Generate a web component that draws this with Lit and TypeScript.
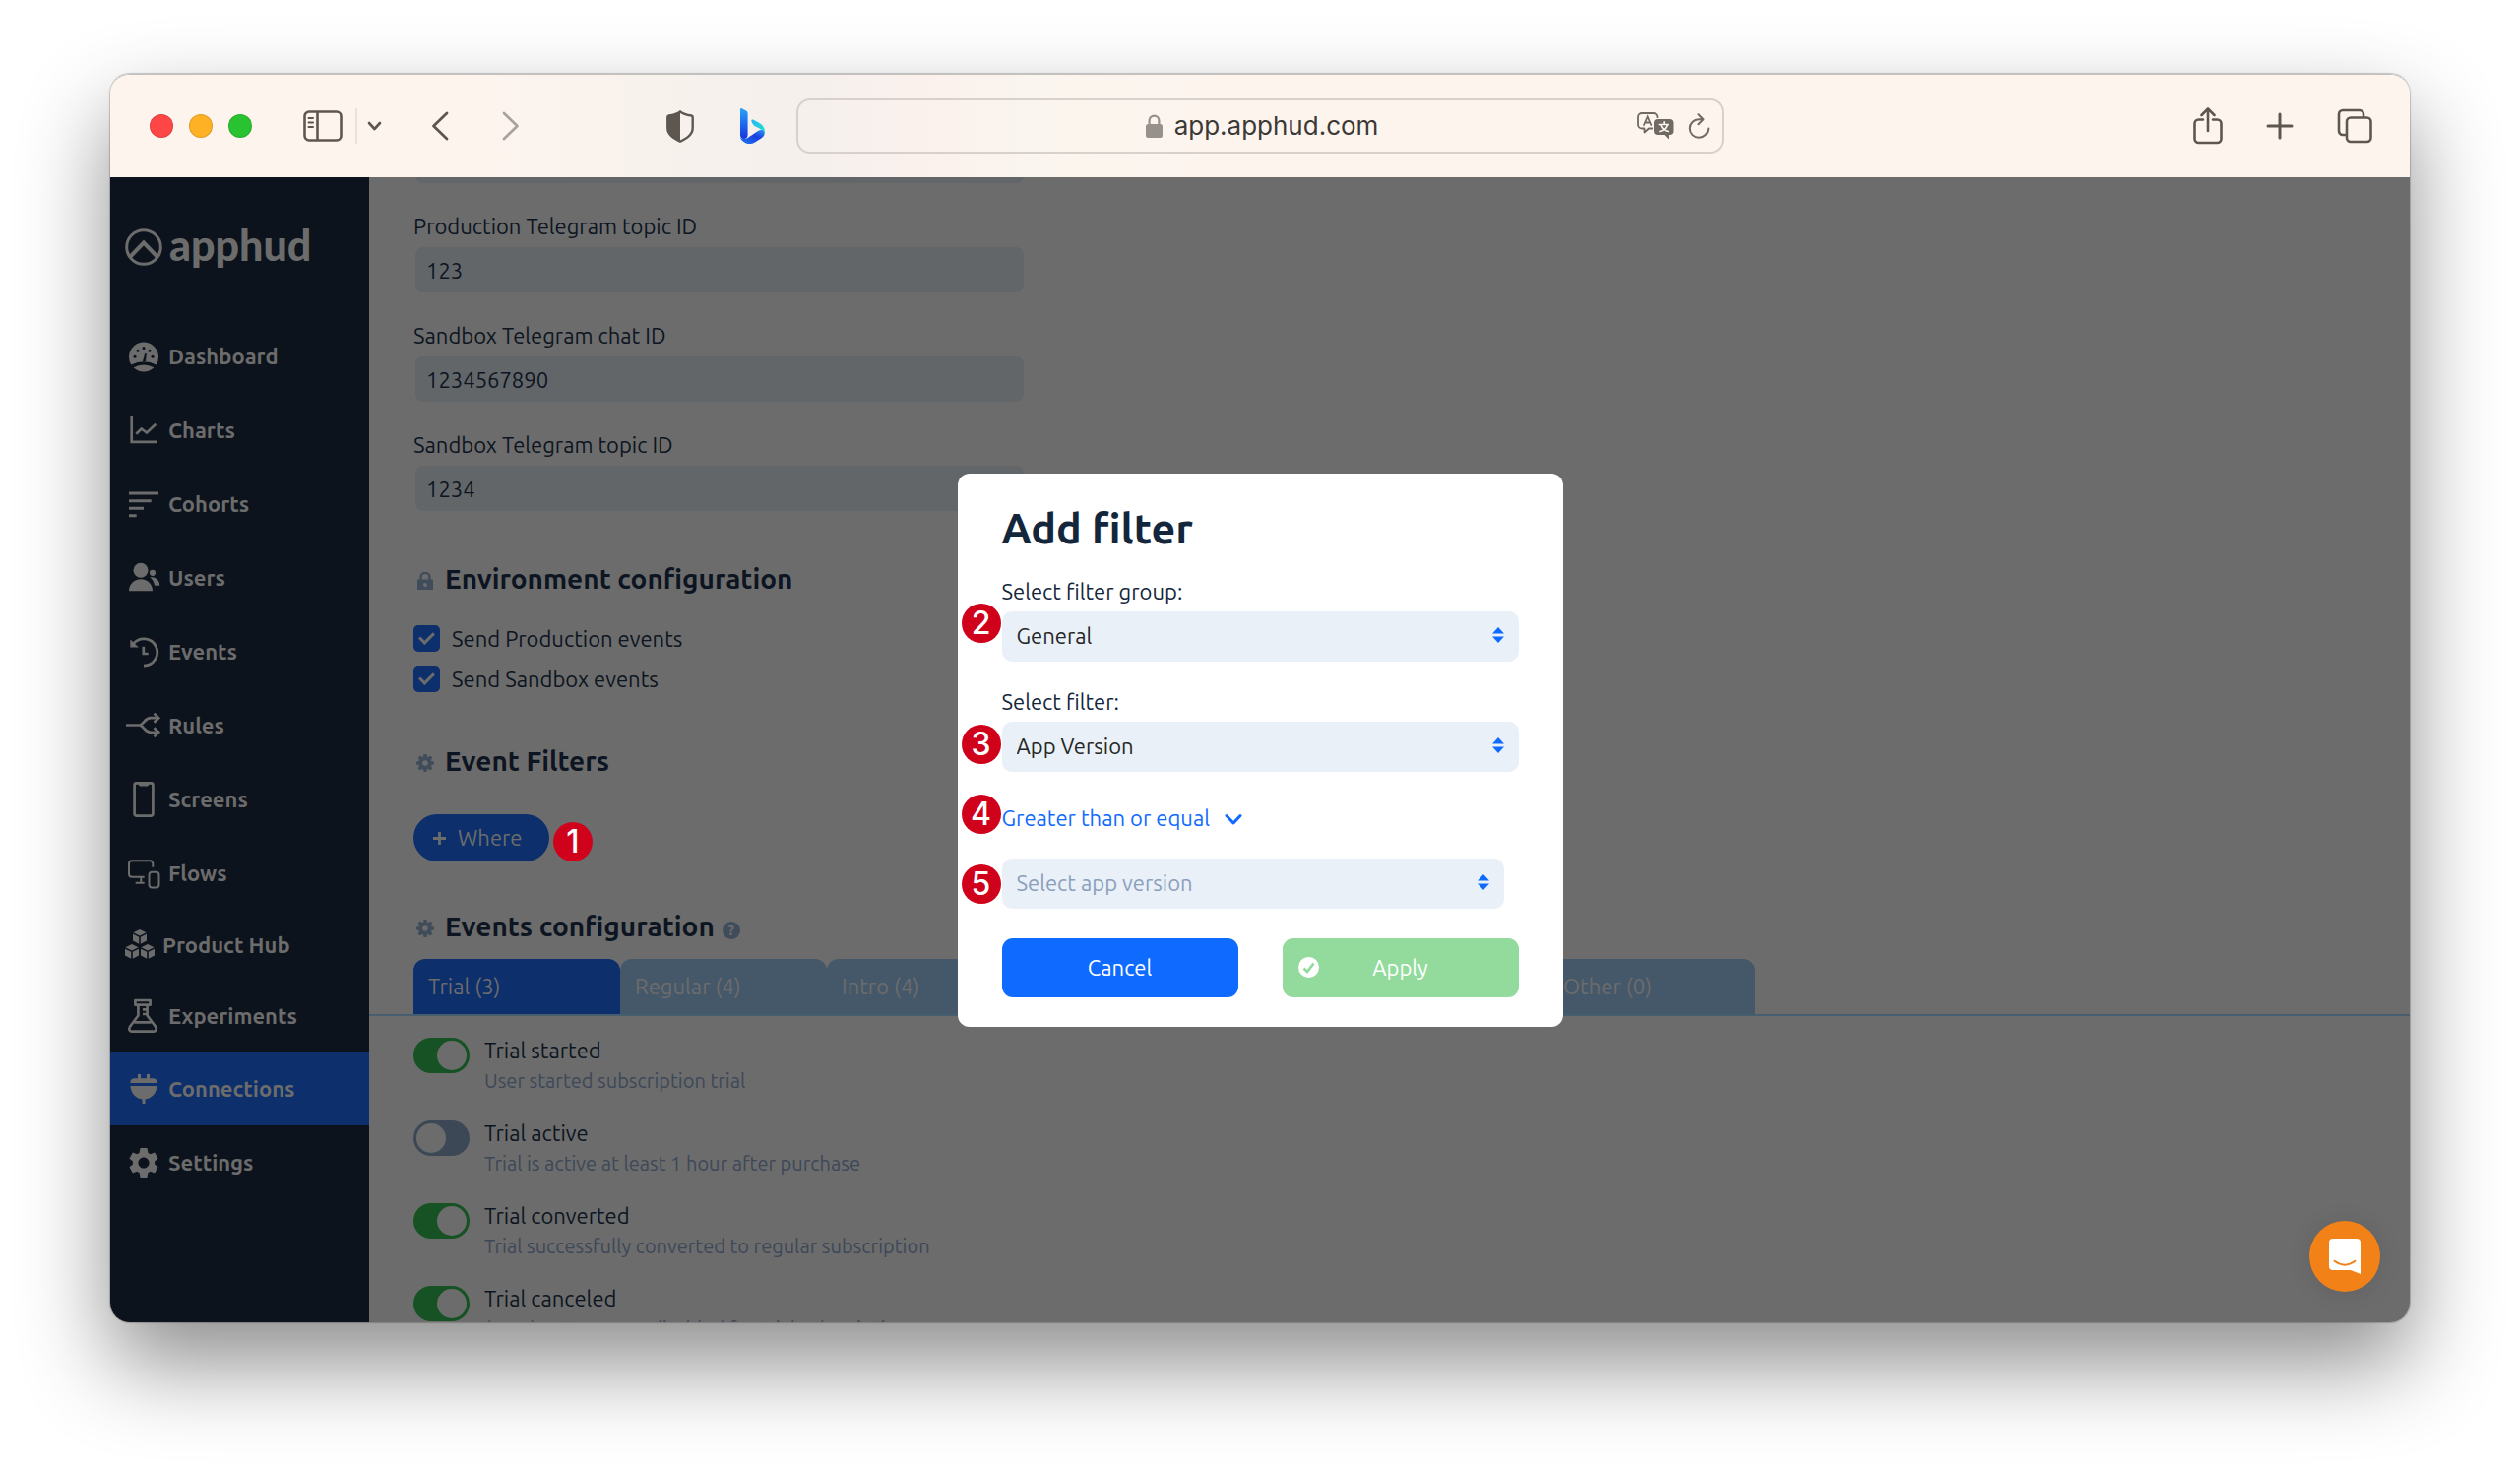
import { LitElement, html, css, svg, nothing } from "lit";
import { customElement, state } from "lit/decorators.js";

const gearTeeth = [0, 45, 90, 135, 180, 225, 270, 315];

const smallGear = html`<svg class="head-icon" viewBox="0 0 18 18" aria-hidden="true">
  <circle cx="9" cy="9" r="4.8" fill="none" stroke="currentColor" stroke-width="4"></circle>
  ${gearTeeth.map((a) => svg`<rect x="7.2" y="0" width="3.6" height="4" rx="1" fill="currentColor" transform="rotate(${a} 9 9)"></rect>`)}
</svg>`;

const smallLock = html`<svg class="head-icon" viewBox="0 0 18 18" aria-hidden="true">
  <path d="M4.6 8V5.2a4.4 4.4 0 0 1 8.8 0V8" fill="none" stroke="currentColor" stroke-width="2.4"></path>
  <path fill="currentColor" fill-rule="evenodd" d="M1 7.6h16V18H1zM9 11a2 2 0 1 0 0 4 2 2 0 0 0 0-4z"></path>
</svg>`;

const cube = (x: number, y: number) => svg`<g transform="translate(${x} ${y})" fill="currentColor">
  <path d="M7 0l6.6 3.2L7 6.4.4 3.2z"></path><path d="M0 4.8l6.2 3v7L0 11.6z"></path><path d="M14 4.8l-6.2 3v7l6.2-3.2z"></path></g>`;

const navIcons: Record<string, unknown> = {
  Dashboard: svg`<path fill="currentColor" d="M5.3 26.6A15 15 0 1 1 30.7 26.6Q18 20 5.3 26.6z"></path>
    <path fill="currentColor" d="M7.6 29.2Q18 23.600 28.4 29.200A15 15 0 0 1 7.600 29.200z"></path>
    <g fill="#0c131c"><circle cx="9" cy="18.300" r="1.500"></circle><circle cx="12" cy="12.300" r="1.500"></circle><circle cx="18" cy="9.500" r="1.500"></circle><circle cx="24" cy="12.300" r="1.500"></circle><circle cx="27" cy="18.300" r="1.500"></circle>
    <path d="M19.200 15l1.600.3-.8 7.700h-3z"></path></g>`,
  Charts: svg`<path fill="none" stroke="currentColor" stroke-width="2.700" d="M5.700 4V29.800H31.700M10.300 21.800L15.700 16.500 21 20.500 30.300 11.800"></path>`,
  Cohorts: svg`<path fill="currentColor" d="M3 5.500h30v3H3zM3 13.200h22.700v3H3zM3 20.800h15v3H3zM3 28.200h7.700v3H3z"></path>`,
  Users: svg`<g fill="currentColor"><circle cx="15" cy="10.200" r="7.500"></circle><path d="M3 31.200c0-7 5-12 12-12s12 5 12 12z"></path><circle cx="27" cy="12.800" r="3.100"></circle><path d="M24.300 17.600c5.700-1.400 9.800 2.500 10 8.200h-5.200c-.6-3.600-2.200-6.200-4.800-8.200z"></path></g>`,
  Events: svg`<path fill="none" stroke="currentColor" stroke-width="2.700" d="M18 32.200A13.700 13.700 0 1 0 7.400 9.900M17.800 12.800V20H22.700"></path><path fill="currentColor" d="M4.300 5.500v8h8.600z"></path>`,
  Rules: svg`<g fill="none" stroke="currentColor" stroke-width="2.700"><path d="M0 17.500H13.500C18 17.500 18.500 10.200 25 10.200H33M13.500 17.500C18 17.500 18.500 24.800 25 24.800H33"></path><path d="M28.500 5.600L33.200 10.200 28.500 14.800M28.500 20.200L33.200 24.800 28.500 29.400"></path></g>`,
  Screens: svg`<rect x="8.600" y="1.300" width="18.800" height="33.400" rx="2.400" fill="none" stroke="currentColor" stroke-width="2.700"></rect><path fill="currentColor" d="M12.500 1.500h11c0 2-1 3-2 3h-7c-1 0-2-1-2-3z"></path>`,
  Flows: svg`<g fill="none" stroke="currentColor" stroke-width="2"><path d="M27.300 11.700V8.300a3 3 0 0 0-3-3H6a3 3 0 0 0-3 3V18.700a3 3 0 0 0 3 3H18.700M15.300 22V27.700M9.700 27.700H18.700"></path><rect x="23.500" y="16.700" width="10" height="15.700" rx="3"></rect></g>`,
  "Product Hub": svg`${cube(13, 2)}${cube(5, 17)}${cube(21, 17)}`,
  Experiments: svg`<g fill="none" stroke="currentColor" stroke-width="2.700" stroke-linejoin="round"><rect x="9.400" y="2" width="15.200" height="4.700"></rect><path d="M12.400 7V17.500L4 28.800c-1.700 3 0 4.900 2 4.900H28c2 0 3.700-1.900 2-4.900L21.600 17.500V7M8.500 24.300h17M21 11.300h-4M21 16h-4"></path></g>`,
  Connections: svg`<path fill="currentColor" d="M12 3h3v5h-3zM21 3h3v5h-3zM8 7.300h20q3.700.4 3.700 4.700H4.300q0-4.300 3.700-4.700zM4.300 15h27.400c-1 8-6 13-12.200 13.500V33h-3v-4.500C10.300 28 5.300 23 4.300 15z"></path>`,
  Settings: svg`<g transform="translate(-.6 -.6) scale(1.550)"><path fill="currentColor" d="M19.140 12.940c.04-.3.06-.61.06-.94 0-.32-.02-.64-.07-.94l2.030-1.580c.18-.14.23-.41.12-.61l-1.920-3.320c-.12-.22-.37-.29-.59-.22l-2.390.96c-.5-.38-1.030-.7-1.620-.94l-.36-2.540c-.04-.24-.24-.41-.48-.41h-3.840c-.24 0-.43.17-.47.41l-.36 2.540c-.59.24-1.130.57-1.620.94l-2.390-.96c-.22-.08-.47 0-.59.22L2.740 8.870c-.12.21-.08.47.12.61l2.030 1.580c-.05.3-.09.63-.09.94s.02.64.07.94l-2.030 1.580c-.18.14-.23.41-.12.61l1.920 3.320c.12.22.37.29.59.22l2.390-.96c.5.38 1.030.7 1.620.94l.36 2.540c.05.24.24.41.48.41h3.840c.24 0 .44-.17.47-.41l.36-2.540c.59-.24 1.130-.56 1.620-.94l2.390.96c.22.08.47 0 .59-.22l1.920-3.320c.12-.22.07-.47-.12-.61l-2.010-1.580zM12 15.600c-1.980 0-3.600-1.620-3.600-3.600s1.620-3.600 3.600-3.600 3.600 1.620 3.600 3.600-1.620 3.600-3.600 3.600z"></path></g>`,
};

const FONT = css`"Ubuntu", "Noto Sans", "Open Sans", sans-serif`;

@customElement("browser-bar")
export class BrowserBar extends LitElement {
  static styles = css`
    :host { display: block; color: #5d5750; }
    .bar { display: grid; grid-template-columns: 1fr minmax(0, 942px) 1fr; align-items: center; height: 104px;
      background: linear-gradient(90deg, #fdf4ee 16%, #f6f1ec 26%, #f5f0ec 30%, #fbf1ed 36%, #faf5ee 40%, #fdf4ee 48%); }
    .side { display: flex; align-items: center; }
    svg { display: block; flex: none; }
    button { display: block; padding: 0; border: 0; background: none; color: inherit; }
    .dot { width: 24px; height: 24px; border-radius: 50%; margin-right: 16px; border: 1px solid rgba(0, 0, 0, .12); box-sizing: border-box; }
    .red { background: #fe4646; }
    .amber { background: #feb125; }
    .green { background: #29c332; }
    .left { padding-left: 40px; }
    .panel { margin-left: 36px; }
    .line { width: 2px; height: 36px; background: #ebe1dc; margin: 0 10px 0 13px; }
    .back { margin-left: 50px; }
    .forward { margin-left: 54px; color: #aaa29e; }
    .shield { margin-left: auto; }
    .bing { margin: 0 32px 0 47px; }
    .address { display: grid; grid-template-columns: 1fr auto 1fr; align-items: center; height: 56px; box-sizing: border-box;
      border: 2px solid #d8d0cb; border-radius: 14px; }
    .site { display: flex; align-items: center; gap: 12px; grid-column: 2; padding-left: 4px; color: #3b3936;
      font: 400 26px/32px "Inter", "Liberation Sans", sans-serif; }
    .tools { display: flex; justify-content: flex-end; align-items: center; gap: 14px; padding-right: 12px; color: #6f6a64; }
    .right { justify-content: flex-end; gap: 44px; padding-right: 38px; }
  `;

  render() {
    return html`<header class="bar">
      <div class="side left">
        <button class="dot red" aria-label="Close"></button>
        <button class="dot amber" aria-label="Minimize"></button>
        <button class="dot green" aria-label="Zoom"></button>
        <button class="panel" aria-label="Sidebar"><svg width="40" height="32" viewBox="0 0 40 32" fill="none" stroke="currentColor" stroke-width="2.600">
          <rect x="1.500" y="1.500" width="37" height="29" rx="4.500"></rect><path d="M14.500 2V30"></path><path stroke-width="2" stroke-linecap="round" d="M5.500 8H10M5.500 12.500H10M5.500 17H10"></path></svg></button>
        <span class="line"></span>
        <button aria-label="Tab groups"><svg width="15" height="10" viewBox="0 0 15 10" fill="none" stroke="currentColor" stroke-width="2.600" stroke-linecap="round" stroke-linejoin="round"><path d="M2 2L7.500 8 13 2"></path></svg></button>
        <button class="back" aria-label="Back"><svg width="18" height="30" viewBox="0 0 18 30" fill="none" stroke="currentColor" stroke-width="2.800" stroke-linecap="round" stroke-linejoin="round"><path d="M16 2L2.500 15 16 28"></path></svg></button>
        <button class="forward" aria-label="Forward"><svg width="18" height="30" viewBox="0 0 18 30" fill="none" stroke="currentColor" stroke-width="2.800" stroke-linecap="round" stroke-linejoin="round"><path d="M2 2L15.500 15 2 28"></path></svg></button>
        <button class="shield" aria-label="Privacy report"><svg width="28" height="33" viewBox="0 0 28 33"><path fill="none" stroke="currentColor" stroke-width="2.400" stroke-linejoin="round" d="M14 1.300C11 4 6 5 2.500 5.500 1.500 5.700 1.300 6 1.300 7V18c0 7 6.500 10.500 12.700 13.700C20.200 28.500 26.700 25 26.700 18V7c0-1-.2-1.300-1.200-1.500C22 5 17 4 14 1.300z"></path><path fill="currentColor" d="M14 1.300C11 4 6 5 2.500 5.500 1.500 5.700 1.300 6 1.300 7V18c0 7 6.500 10.500 12.700 13.700z"></path></svg></button>
        <button class="bing" aria-label="Bing"><svg width="25" height="36" viewBox="0 0 25 36">
          <defs>
            <linearGradient id="stem" x1="0" y1="0" x2="0" y2="1"><stop offset="0" stop-color="#2ba4f8"></stop><stop offset=".5" stop-color="#1d6bf0"></stop><stop offset="1" stop-color="#1733dc"></stop></linearGradient>
            <linearGradient id="bowl" x1="0" y1="0" x2="1" y2="1"><stop offset="0" stop-color="#27b6f5"></stop><stop offset="1" stop-color="#1fe3c9"></stop></linearGradient>
            <linearGradient id="foot" x1="0" y1="1" x2="1" y2="0"><stop offset="0" stop-color="#1c7cf0"></stop><stop offset=".6" stop-color="#1a3fe0"></stop><stop offset="1" stop-color="#2a9bf0"></stop></linearGradient>
          </defs>
          <path fill="url(#bowl)" d="M11.500 13.500c-.6-2 .6-2.500 2-1.800l6 3.300c5 3 6 7 5 11-1-3-3-4.500-5.500-5.700l-4-2c-1-.5-2.300-1.800-3.500-4.800z"></path>
          <path fill="url(#foot)" d="M0 29.500c2 2 5.500 2 8 .3l10-6.800c4-2.500 7.500 0 6.500 3.500-.5 2-2 3.300-4 4.600L14.500 34.700c-3 1.900-7.500 1.600-10.300-.3C1.500 32.700.3 31.500 0 29.500z"></path>
          <path fill="url(#stem)" d="M0 1.300C0 .2.8-.3 1.800.2L6 2.400c1.200.7 1.600 1.500 1.600 3V27c0 2.500-1.800 4-4 4S0 29.500 0 27z"></path></svg></button>
      </div>
      <div class="address">
        <span class="site"><svg width="17" height="24" viewBox="0 0 17 24"><path fill="none" stroke="#96918b" stroke-width="2.200" d="M3.600 11V6.500a4.900 4.900 0 0 1 9.800 0V11"></path><rect x="0" y="10" width="17" height="14" rx="2.500" fill="#96918b"></rect></svg>app.apphud.com</span>
        <span class="tools">
          <button aria-label="Translate"><svg width="38" height="28" viewBox="0 0 38 28"><path fill="none" stroke="currentColor" stroke-width="1.800" stroke-linejoin="round" d="M16 16.500H12L7.500 20.500V16.500H5a4 4 0 0 1-4-4V5a4 4 0 0 1 4-4H16.500a4 4 0 0 1 4 4V6"></path><path fill="none" stroke="currentColor" stroke-width="1.800" stroke-linecap="round" d="M7 13L10.700 4.500 14.300 13M8.300 10.500H13"></path>
            <path fill="currentColor" d="M21 7H33.500a4 4 0 0 1 4 4V19a4 4 0 0 1-4 4H32.500V28L27.500 23H21a4 4 0 0 1-4-4V11a4 4 0 0 1 4-4z"></path><path fill="none" stroke="#fdf4ee" stroke-width="1.700" stroke-linecap="round" d="M22.300 12.500H32M27.200 9.800V12.500M23 19.500Q29 18 30.500 12.800M24 13Q26 18.500 31.500 19.500"></path></svg></button>
          <button aria-label="Reload"><svg width="22" height="26" viewBox="0 0 22 26" fill="none" stroke="currentColor" stroke-width="2" stroke-linecap="round" stroke-linejoin="round"><path d="M15 6.200H11A9.300 9.300 0 1 0 20.400 15.500M10.500 1.200L15.500 6.200 10.500 11.200"></path></svg></button>
        </span>
      </div>
      <div class="side right">
        <button aria-label="Share"><svg width="30" height="38" viewBox="0 0 30 38" fill="none" stroke="currentColor" stroke-width="2.600" stroke-linecap="round" stroke-linejoin="round"><path d="M10 12.500H5.500a4 4 0 0 0-4 4V32a4 4 0 0 0 4 4h19a4 4 0 0 0 4-4V16.500a4 4 0 0 0-4-4H20M15 24V2M8.500 8L15 1.500 21.500 8"></path></svg></button>
        <button aria-label="New tab"><svg width="28" height="28" viewBox="0 0 28 28" fill="none" stroke="currentColor" stroke-width="3" stroke-linecap="round"><path d="M14 2V26M2 14H26"></path></svg></button>
        <button aria-label="All tabs"><svg width="36" height="36" viewBox="0 0 36 36" fill="none" stroke="currentColor" stroke-width="2.600"><rect x="10" y="9.500" width="24.500" height="24.500" rx="4"></rect><path d="M10 27H6a4 4 0 0 1-4-4V6a4 4 0 0 1 4-4H23a4 4 0 0 1 4 4V9"></path></svg></button>
      </div>
    </header>`;
  }
}

@customElement("side-nav")
export class SideNav extends LitElement {
  static styles = css`
    :host { display: block; background: #0c131c; color: #6c6c6c; font-family: ${FONT}; }
    .logo { display: flex; align-items: center; gap: 7px; height: 144px; padding: 0 0 6px 15px; box-sizing: border-box;
      color: inherit; text-decoration: none; font: 900 43px/44px "Lato", "Noto Sans", sans-serif; }
    .mark { margin-top: 4px; }
    .link { display: flex; align-items: center; gap: 7px; height: 75px; padding-left: 16px; color: inherit; text-decoration: none;
      font-size: 22px; line-height: 30px; font-weight: 700; }
    .short { height: 72px; }
    .inset { padding-left: 10px; }
    .active { background: #0d2f6b; }
    .icon { flex: none; width: 36px; height: 36px; }
  `;

  render() {
    return html`<nav>
      <a class="logo" href="#"><svg class="mark" width="38" height="38" viewBox="0 0 38 38" fill="none" stroke="currentColor" stroke-width="3" aria-hidden="true"><circle cx="19" cy="19" r="17.300"></circle><path d="M5.500 28.500L19 14.500 32.500 28.500" stroke-width="4"></path></svg>apphud</a>
      ${Object.entries(navIcons).map(([name, icon]) => {
        const short = name === "Product Hub" || name === "Experiments" ? "short" : "";
        const inset = name === "Product Hub" ? "inset" : "";
        const active = name === "Connections";
        return html`<a class="link ${short} ${inset} ${active ? "active" : ""}" href="#" aria-current=${active ? "page" : nothing}>
          <svg class="icon" viewBox="0 0 36 36" aria-hidden="true">${icon}</svg>${name}</a>`;
      })}
    </nav>`;
  }
}

@customElement("filter-dialog")
export class FilterDialog extends LitElement {
  static styles = css`
    :host { display: block; font-family: ${FONT}; color: #14263c; font-size: 22px; line-height: 32px; }
    .dialog { position: relative; width: 615px; box-sizing: border-box; padding: 30px 45px; background: #fff; border-radius: 12px; }
    h1 { margin: 0 0 24px; font-size: 43px; line-height: 50px; font-weight: 700; }
    label { display: block; margin-bottom: 4px; }
    .picker { display: grid; align-items: center; margin-bottom: 25px; }
    .picker > * { grid-area: 1 / 1; }
    select { appearance: none; width: 100%; height: 51px; padding: 0 15px; border: 0; border-radius: 10px; background: #e9f0f7;
      color: #262626; font: inherit; opacity: 1; }
    .empty { color: #8a9fbd; }
    .arrows { justify-self: end; margin: 0 15px 2px 0; pointer-events: none; }
    .last { margin: 0 15px 30px 0; }
    .mode { display: flex; align-items: center; gap: 15px; margin: 31px 0 25px; padding: 0; border: 0; background: none; color: #0f6bff; font: inherit; }
    .mode svg { margin-top: 3px; }
    .actions { display: grid; grid-template-columns: 1fr 1fr; gap: 45px; }
    .action { display: grid; align-items: center; height: 60px; padding: 0 16px; border: 0; border-radius: 11px; background: #0f6bff; color: #fff; font: inherit; }
    .action > * { grid-area: 1 / 1; }
    .apply { background: #92db9c; }
    .badge { position: absolute; left: 4px; width: 40px; height: 40px; border-radius: 50%; background: #d0021b; color: #fff;
      text-align: center; font: 500 32px/40px "Inter", sans-serif; }
    .b2 { top: 132px; }
    .b3 { top: 255px; }
    .b4 { top: 326px; }
    .b5 { top: 397px; }
    svg { display: block; }
  `;

  private arrows() {
    return html`<svg class="arrows" width="12" height="16" viewBox="0 0 12 16" aria-hidden="true"><path fill="#0f6bff" d="M6 0L12 6.500H0zM6 16L0 9.500H12z"></path></svg>`;
  }

  render() {
    return html`<section class="dialog" role="dialog" aria-labelledby="title">
      <h1 id="title">Add filter</h1>
      <label for="group">Select filter group:</label>
      <div class="picker"><select id="group"><option>General</option></select>${this.arrows()}</div>
      <label for="filter">Select filter:</label>
      <div class="picker"><select id="filter"><option>App Version</option></select>${this.arrows()}</div>
      <button class="mode">Greater than or equal<svg width="18" height="12" viewBox="0 0 18 12" fill="none" stroke="currentColor" stroke-width="3" stroke-linecap="round" stroke-linejoin="round" aria-hidden="true"><path d="M2 2.500L9 10 16 2.500"></path></svg></button>
      <div class="picker last"><select class="empty" aria-label="App version"><option>Select app version</option></select>${this.arrows()}</div>
      <div class="actions">
        <button class="action">Cancel</button>
        <button class="action apply"><svg width="21" height="21" viewBox="0 0 21 21" aria-hidden="true"><circle cx="10.500" cy="10.500" r="10.500" fill="#fff"></circle><path d="M5.500 11.500L9 15 15.500 6.500" fill="none" stroke="#92db9c" stroke-width="2.800"></path></svg><span>Apply</span></button>
      </div>
      <span class="badge b2">2</span><span class="badge b3">3</span><span class="badge b4">4</span><span class="badge b5">5</span>
    </section>`;
  }
}

@customElement("connection-form")
export class ConnectionForm extends LitElement {
  @state() private fields = [
    { id: "prod-topic", label: "Production Telegram topic ID", value: "123" },
    { id: "sand-chat", label: "Sandbox Telegram chat ID", value: "1234567890" },
    { id: "sand-topic", label: "Sandbox Telegram topic ID", value: "1234" },
  ];

  @state() private events = [
    { name: "Trial started", note: "User started subscription trial", on: true },
    { name: "Trial active", note: "Trial is active at least 1 hour after purchase", on: false },
    { name: "Trial converted", note: "Trial successfully converted to regular subscription", on: true },
    { name: "Trial canceled", note: "(User) Auto-renew disabled for trial subscription", on: true },
  ];

  static styles = css`
    :host { display: block; background: #6c6c6c; color: #0c1521; font-family: ${FONT}; font-size: 22px; line-height: 32px; overflow: hidden; }
    .inner { padding-left: 45px; }
    .scrolled { margin-top: -40px; }
    .text { display: block; width: 618px; height: 46px; box-sizing: border-box; margin: 0 0 0 2px; padding: 0 11px; border: 0; border-radius: 8px;
      background: #626669; color: inherit; font: inherit; }
    .caption { display: block; margin: 28px 0 5px; }
    h2 { display: flex; align-items: center; gap: 11px; margin: 0; padding-left: 3px; font-size: 28px; line-height: 40px; font-weight: 700; }
    .head-icon { width: 18px; height: 18px; margin-top: 4px; color: #414c5b; }
    .env { margin: 49px 0 27px; }
    .check { display: flex; align-items: center; gap: 12px; height: 27px; margin-bottom: 14px; }
    .box { appearance: none; display: grid; place-items: center; width: 27px; height: 27px; margin: 0; border-radius: 5px; background: #0d2f6b; }
    .box::after { content: ""; width: 12px; height: 6px; margin-top: -4px; border: solid #6c6c6c; border-width: 0 0 3px 3px; transform: rotate(-45deg); }
    .filters { margin: 50px 0 34px; }
    .where-row { display: flex; align-items: flex-start; gap: 4px; }
    .where { display: flex; align-items: center; gap: 12px; width: 138px; height: 48px; padding: 0 20px; border: 0; border-radius: 24px;
      background: #0d2f6b; color: #6c6c6c; font: inherit; }
    .badge { width: 40px; height: 40px; margin-top: 8px; border-radius: 50%; background: #d0021b; color: #fff; text-align: center;
      font: 500 32px/40px "Inter", sans-serif; }
    .config { margin: 46px 0 13px; }
    .help { width: 18px; height: 18px; margin: 8px 0 0 -3px; border-radius: 50%; background: #414c5b; color: #6c6c6c; font-size: 14px; line-height: 18px; text-align: center; }
    .tabs { display: flex; height: 56px; padding-left: 45px; border-bottom: 2px solid #475d70; }
    .tab { width: 210px; padding: 0 15px; border: 0; border-radius: 12px 12px 0 0; background: #45586a; color: #6c6c6c; font: inherit; text-align: left; }
    .current { background: #0d2f6b; }
    .far { margin-left: 523px; }
    .events { display: grid; gap: 23px; padding: 20px 0 0 45px; }
    .event { display: flex; gap: 15px; }
    .switch { appearance: none; flex: none; width: 57px; height: 36px; margin: 2px 0 0; padding: 3px; box-sizing: border-box; border-radius: 18px; background: #3d4857; }
    .switch::after { content: ""; display: block; width: 30px; height: 30px; border-radius: 50%; background: #6c6c6c; }
    .switch:checked { background: #165223; }
    .switch:checked::after { margin-left: 21px; }
    .name { display: block; line-height: 30px; }
    .note { display: block; margin-top: 1px; font-size: 20px; line-height: 30px; color: #3d4858; }
  `;

  render() {
    return html`
      <div class="inner">
        <div class="scrolled"><input class="text" aria-label="Production Telegram chat ID"></div>
        ${this.fields.map((f) => html`<label class="caption" for=${f.id}>${f.label}</label><input class="text" id=${f.id} .value=${f.value}>`)}
        <h2 class="env">${smallLock}Environment configuration</h2>
        <label class="check"><input class="box" type="checkbox" checked>Send Production events</label>
        <label class="check"><input class="box" type="checkbox" checked>Send Sandbox events</label>
        <h2 class="filters">${smallGear}Event Filters</h2>
        <div class="where-row">
          <button class="where"><svg width="13" height="13" viewBox="0 0 13 13" fill="none" stroke="currentColor" stroke-width="2.800" aria-hidden="true"><path d="M6.500 0V13M0 6.500H13"></path></svg>Where</button>
          <span class="badge">1</span>
        </div>
        <h2 class="config">${smallGear}Events configuration<span class="help">?</span></h2>
      </div>
      <div class="tabs" role="tablist">
        <button class="tab current" role="tab" aria-selected="true">Trial (3)</button>
        <button class="tab" role="tab">Regular (4)</button>
        <button class="tab" role="tab">Intro (4)</button>
        <button class="tab far" role="tab">Other (0)</button>
      </div>
      <div class="events">
        ${this.events.map((e) => html`<label class="event"><input class="switch" type="checkbox" role="switch" ?checked=${e.on}>
          <span><span class="name">${e.name}</span><span class="note">${e.note}</span></span></label>`)}
      </div>`;
  }
}

@customElement("app-root")
export class AppRoot extends LitElement {
  static styles = css`
    :host { display: flex; height: 100vh; box-sizing: border-box; padding: 75px 112px 147px; background: #fff; overflow: hidden; }
    .window { flex: 1; min-width: 0; display: flex; flex-direction: column; border-radius: 20px; overflow: hidden;
      border-top: 1px solid #c4bfbb; box-shadow: 0 0 1px 1px rgba(0, 0, 0, .2), 0 42px 90px rgba(0, 0, 0, .45); }
    .page { position: relative; flex: 1; min-height: 0; display: grid; grid-template-columns: 263px minmax(0, 1fr); grid-template-rows: minmax(0, 1fr);
      box-shadow: inset 0 1px 1px #444; }
    .modal { position: absolute; inset: 0; display: grid; place-items: center; }
    .chat { position: absolute; right: 30px; bottom: 31px; width: 72px; height: 72px; padding: 0; border: 0; border-radius: 50%; background: #f28118;
      display: grid; place-items: center; box-shadow: 0 2px 24px rgba(0, 0, 0, .1); }
  `;

  render() {
    return html`<div class="window">
      <browser-bar></browser-bar>
      <main class="page">
        <side-nav></side-nav>
        <connection-form></connection-form>
        <div class="modal"><filter-dialog></filter-dialog></div>
        <button class="chat" aria-label="Open chat"><svg width="32" height="36" viewBox="0 0 32 36" aria-hidden="true"><path fill="#fff" d="M4 0H28a4 4 0 0 1 4 4V36L22 32H4a4 4 0 0 1-4-4V4A4 4 0 0 1 4 0z"></path><path d="M5.500 22.800Q16 30.500 26.500 22.800" fill="none" stroke="#f28118" stroke-width="2" stroke-linecap="round"></path></svg></button>
      </main>
    </div>`;
  }
}
